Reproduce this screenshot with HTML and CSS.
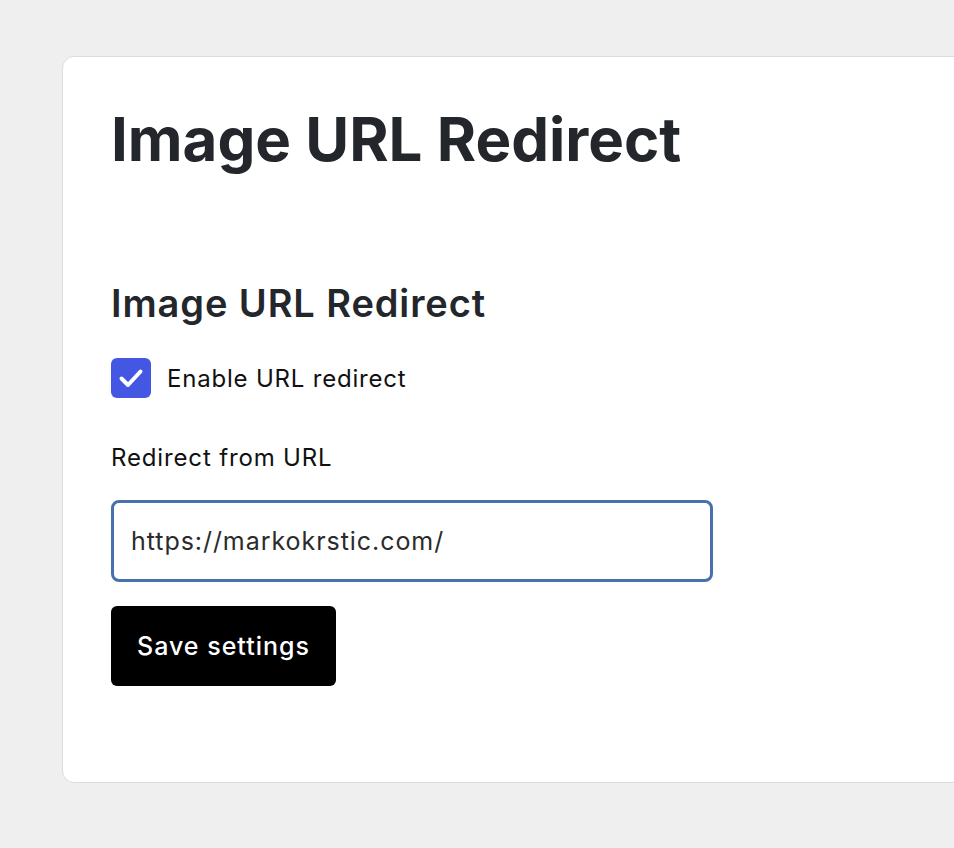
FILE: index.html
```html
<!DOCTYPE html>
<html lang="en">
<head>
<meta charset="utf-8">
<title>Image URL Redirect</title>
<link rel="stylesheet" href="styles.css">
</head>
<body>
<main class="card">
  <h1 class="title">Image URL Redirect</h1>
  <form class="settings">
    <h2 class="section-title">Image URL Redirect</h2>
    <label class="check-row">
      <span class="checkbox">
        <svg viewBox="0 0 40 40" width="40" height="40" aria-hidden="true">
          <path d="M10.5 20.5 L17 27 L29.5 13.5" fill="none" stroke="#fff" stroke-width="4" stroke-linecap="round" stroke-linejoin="round"/>
        </svg>
      </span>
      <span class="check-label">Enable URL redirect</span>
    </label>
    <label class="field-label" for="url">Redirect from URL</label>
    <input class="url-input" id="url" type="text" value="https://markokrstic.com/">
    <button class="save-btn" type="button">Save settings</button>
  </form>
</main>
</body>
</html>
```

FILE: styles.css
```css
html, body {
  margin: 0;
  padding: 0;
}
body {
  background: #efefef;
  font-family: Inter, "Noto Sans", "Liberation Sans", sans-serif;
  color: #1e1e1e;
  overflow: hidden;
  width: 954px;
  height: 848px;
}
.card {
  box-sizing: border-box;
  margin: 56px 0 0 62px;
  width: 1000px;
  height: 727px;
  background: #fff;
  border: 1.5px solid #dcdcdc;
  border-radius: 12px;
  padding: 40px 48px 0 48px;
}
.title {
  margin: 0;
  font-size: 60px;
  line-height: 84px;
  font-weight: 700;
  color: #23272b;
  letter-spacing: 0;
}
.settings {
  display: flex;
  flex-direction: column;
  align-items: flex-start;
  margin-top: 98px;
}
.section-title {
  margin: 0;
  font-size: 38px;
  line-height: 48px;
  font-weight: 600;
  color: #23272b;
  letter-spacing: 0.9px;
}
.check-row {
  display: flex;
  align-items: center;
  gap: 16px;
  margin-top: 31px;
}
.checkbox {
  width: 40px;
  height: 40px;
  border-radius: 6px;
  background: #4457e3;
  display: flex;
}
.check-label {
  font-size: 24px;
  color: #111;
  letter-spacing: 0.8px;
}
.field-label {
  margin-top: 42px;
  font-size: 24px;
  line-height: 36px;
  color: #111;
  letter-spacing: 0.85px;
}
.url-input {
  box-sizing: border-box;
  margin-top: 24px;
  width: 602px;
  height: 82px;
  border: 3px solid #4771ad;
  border-radius: 8px;
  padding: 0 17px;
  font-family: inherit;
  font-size: 25px;
  letter-spacing: 0.95px;
  color: #2b2b2b;
  outline: none;
  background: #fff;
}
.save-btn {
  margin-top: 24px;
  width: 225px;
  height: 80px;
  border: none;
  border-radius: 6px;
  background: #000;
  color: #fff;
  font-family: inherit;
  font-size: 25px;
  font-weight: 500;
  letter-spacing: 1px;
  padding: 0;
}
```
